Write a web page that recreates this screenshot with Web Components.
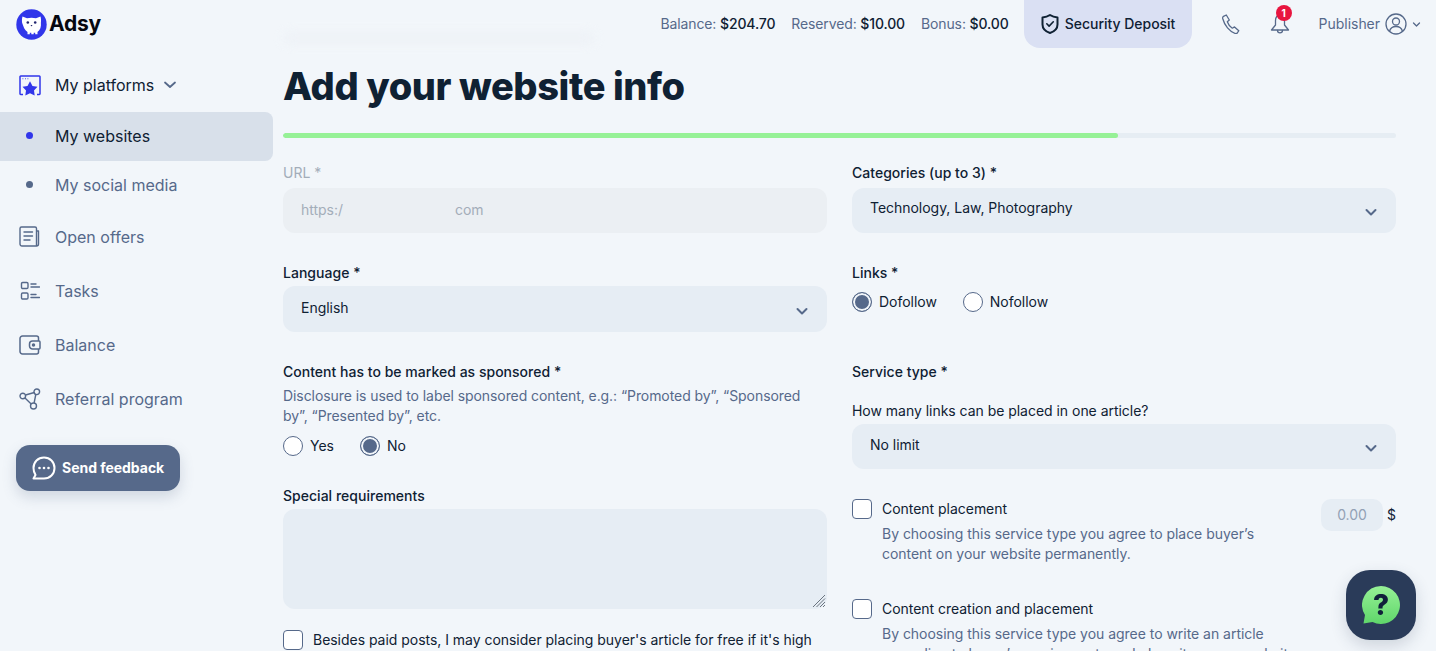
<!DOCTYPE html>
<html lang="en">
<head>
<meta charset="utf-8">
<title>Add your website info</title>
<style>
  html, body { margin: 0; height: 651px; overflow: hidden; }
  body { background: #f2f6fa; color: #0f2133; font: 14px/20px Inter, "Liberation Sans", sans-serif; letter-spacing: -.03px; }
</style>
</head>
<body>
<adsy-page>
  <app-header slot="top"></app-header>
  <side-nav slot="side"></side-nav>
  <website-form slot="main"></website-form>
</adsy-page>
<help-button></help-button>

<script>
const CHEVRON = `<svg width="14" height="14" viewBox="0 0 14 14" fill="none" stroke="#56698a" stroke-width="2" stroke-linecap="round" stroke-linejoin="round"><path d="M2.5 5l4.5 4.5L11.500 5"/></svg>`;

class AdsyPage extends HTMLElement {
  constructor() {
    super();
    this.attachShadow({ mode: 'open' });
    this.shadowRoot.innerHTML = `
      <style>
        :host { display: grid; grid-template-columns: 273px 1fr; grid-template-rows: 48px 1fr; height: 651px; overflow: hidden; }
        .top { grid-column: 1 / 3; }
      </style>
      <div class="top"><slot name="top"></slot></div>
      <div><slot name="side"></slot></div>
      <div><slot name="main"></slot></div>`;
  }
}

class AppHeader extends HTMLElement {
  constructor() {
    super();
    this.attachShadow({ mode: 'open' });
    this.shadowRoot.innerHTML = `
      <style>
        :host { display: flex; align-items: center; height: 48px; padding: 0 15px 0 16px; color: #0f2133; }
        .logo { display: flex; align-items: center; gap: 2px; font-size: 21px; font-weight: 700; color: #05070f; letter-spacing: -.2px; }
        .stats { margin-left: auto; display: flex; gap: 16px; color: #56698a; letter-spacing: -.13px; }
        .stats b { font-weight: 500; color: #0f2133; }
        .stats span { white-space: nowrap; }
        .deposit { margin-left: 15px; width: 168px; height: 48px; box-sizing: border-box; background: #dae0f3; border-radius: 0 0 16px 16px; display: flex; align-items: center; justify-content: center; gap: 5px; font-weight: 500; white-space: nowrap; }
        .phone { margin-left: 29px; display: flex; }
        .bell { margin-left: 29px; position: relative; display: flex; }
        .badge { position: absolute; top: -8px; left: 6px; width: 16px; height: 16px; border-radius: 50%; background: #e8153f; color: #fff; font-size: 10px; line-height: 16px; font-weight: 700; text-align: center; }
        .user { margin-left: 29px; display: flex; align-items: center; color: #56698a; gap: 5px; }
      </style>
      <div class="logo">
        <svg width="31" height="31" viewBox="0 0 31 31">
          <circle cx="15.500" cy="15.500" r="15.200" fill="#3136ea"/>
          <path d="M6.500 7.500l4.500 1.700c3-.7 6-.7 9 0l4.500-1.700c.6 2 .7 4.200.4 6.300.4 4-.6 7.400-3.400 9.200v2.200h-2.300v-1.400h-1.500v1.400h-2.400v-1.400h-1.500v1.400H11.500V23c-3-1.800-4-5.200-5.400-9.200-.3-2.100-.2-4.300.4-6.300z" fill="#fff"/>
          <circle cx="11.800" cy="13.500" r="1.300" fill="#20246e"/><circle cx="19.200" cy="13.500" r="1.300" fill="#20246e"/>
          <path d="M14.500 16h2l-1 1.500z" fill="#20246e"/>
        </svg>
        <span>Adsy</span>
      </div>
      <div class="stats">
        <span>Balance: <b>$204.70</b></span>
        <span>Reserved: <b>$10.00</b></span>
        <span>Bonus: <b>$0.00</b></span>
      </div>
      <div class="deposit">
        <svg width="20" height="22" viewBox="0 0 20 22" fill="none" stroke="#0f2133" stroke-width="2" stroke-linejoin="round" stroke-linecap="round"><path d="M10 2c2.300 1.600 4.800 2.300 7.500 2.500v7c0 4-3 7-7.500 8.500-4.500-1.500-7.500-4.500-7.500-8.500v-7C5.200 4.300 7.700 3.600 10 2z"/><path d="M6.800 10.800l2.300 2.300 4.200-4.300" stroke-width="1.600"/></svg>
        <span>Security Deposit</span>
      </div>
      <div class="phone">
        <svg width="20" height="20" viewBox="0 0 20 20" fill="none" stroke="#56698a" stroke-width="1.300" stroke-linejoin="round"><path d="M2.500 2.300L5.300 1l3 5-2 1.800c.8 2.300 2.600 5 5 6.400l2.200-1.300 4.300 3.800-1.500 2.300c-.5.600-1.200.7-2 .5C8.500 17.500 3.500 11.500 1.700 4.500c-.2-.9.200-1.700.8-2.200z"/></svg>
      </div>
      <div class="bell">
        <svg width="20" height="22" viewBox="0 0 20 22" fill="none" stroke="#56698a" stroke-width="1.300" stroke-linejoin="round" stroke-linecap="round"><path d="M10 2.500c-3 0-4.500 2.300-4.500 5v4.500L1.500 17h17l-4-5V7.500c0-2.700-1.500-5-4.500-5z"/><path d="M7.500 17.300c0 3.500 5 3.500 5 0"/></svg>
        <span class="badge">1</span>
      </div>
      <div class="user">
        <span>Publisher</span>
        <svg width="22" height="22" viewBox="0 0 22 22" fill="none" stroke="#56698a" stroke-width="1.300"><circle cx="11" cy="11" r="10"/><circle cx="11" cy="8.500" r="3.500"/><path d="M4.500 18.500c.8-3.500 3.500-5 6.500-5s5.700 1.500 6.500 5"/></svg>
        <svg width="9" height="9" viewBox="0 0 9 9" fill="none" stroke="#56698a" stroke-width="1.300" stroke-linecap="round" stroke-linejoin="round"><path d="M1.500 3l3 3 3-3"/></svg>
      </div>`;
  }
}

class NavItem extends HTMLElement {
  constructor() {
    super();
    this.attachShadow({ mode: 'open' });
    this.shadowRoot.innerHTML = `
      <style>
        :host { display: flex; align-items: center; height: 49px; box-sizing: border-box; padding-left: 19px; gap: 14px; font-size: 16px; line-height: 24px; color: #56698a; letter-spacing: 0; }
        :host([active]) { background: #d8e0ea; color: #0f2133; border-radius: 0 8px 8px 0; }
        :host([parent]) { color: #0f2133; }
        .icon { width: 22px; height: 24px; display: flex; align-items: center; justify-content: center; }
      </style>
      <span class="icon"><slot name="icon"></slot></span>
      <slot></slot>`;
  }
}

class SideNav extends HTMLElement {
  constructor() {
    super();
    this.attachShadow({ mode: 'open' });
    this.shadowRoot.innerHTML = `
      <style>
        :host { display: block; padding-top: 12px; }
        nav-item.tall { height: 54px; }
        nav-item.up { padding-bottom: 2px; }
        .dot { width: 7px; height: 7px; border-radius: 50%; background: #56698a; margin-left: -1px; }
        .dot.on { background: #3136ea; }
        .feedback { margin: 19px 0 0 16px; width: 164px; height: 46px; box-sizing: border-box; background: #56698a; border-radius: 14px; box-shadow: 0 6px 14px rgba(86,105,138,.22); color: #fff; font-weight: 700; display: flex; align-items: center; padding-left: 16px; gap: 6px; white-space: nowrap; }
      </style>
      <nav-item parent class="up" style="height:52px">
        <svg slot="icon" width="22" height="21" viewBox="0 0 22 21" fill="none"><path d="M4 19.500H1.700a.7.7 0 01-.7-.7V1.700A.7.7 0 011.700 1h18.600a.7.7 0 01.7.7v17.100a.7.7 0 01-.7.7H18" stroke="#3136ea" stroke-width="1.500"/><path d="M11 6.300l2.500 4.600 5 .9-3.500 3.700.7 5-4.700-2.200-4.700 2.200.7-5-3.500-3.700 5-.9z" fill="#3136ea"/><path d="M3.500 3.700h.8M6 3.700h.8M8.500 3.700h.8" stroke="#3136ea" stroke-width="1.100"/></svg>
        <span>My platforms</span>
        <svg style="margin-left:-5px" width="14" height="14" viewBox="0 0 14 14" fill="none" stroke="#56698a" stroke-width="1.800" stroke-linecap="round" stroke-linejoin="round"><path d="M2 4.500l5 4.500 5-4.500"/></svg>
      </nav-item>
      <nav-item active class="up"><span slot="icon" class="dot on"></span>My websites</nav-item>
      <nav-item class="up"><span slot="icon" class="dot"></span>My social media</nav-item>
      <nav-item class="tall">
        <svg slot="icon" width="22" height="22" viewBox="0 0 22 22" fill="none" stroke="#56698a" stroke-width="1.400" stroke-linecap="round" stroke-linejoin="round"><path d="M17.500 20H3a2 2 0 01-2-2V2.500A1.500 1.500 0 012.500 1h13.500a1.500 1.500 0 011.500 1.500V20a2 2 0 002-2V5h-2"/><path d="M5 6h8.500M5 10h8.500M5 14h6"/></svg>
        Open offers</nav-item>
      <nav-item class="tall">
        <svg slot="icon" width="20" height="20" viewBox="0 0 20 20" fill="none" stroke="#56698a" stroke-width="1.400" stroke-linecap="round"><rect x="1.500" y="1.500" width="6.500" height="6" rx="1.200"/><rect x="1.500" y="12" width="6.500" height="6" rx="1.200"/><path d="M11 3h5M11 6h8.500M11 13.500h5M11 16.500h8.500"/></svg>
        Tasks</nav-item>
      <nav-item class="tall">
        <svg slot="icon" width="22" height="20" viewBox="0 0 22 20" fill="none" stroke="#56698a" stroke-width="1.500" stroke-linejoin="round"><path d="M19.500 6V3a2 2 0 00-2-2H3.500A2.500 2.500 0 001 3.500v13A2.500 2.500 0 003.500 19h14a2 2 0 002-2v-3"/><path d="M13.500 6h6.500a1 1 0 011 1v6a1 1 0 01-1 1h-6.500a3 3 0 01-3-3V9a3 3 0 013-3z"/><circle cx="14.500" cy="10" r="1" fill="#56698a"/></svg>
        Balance</nav-item>
      <nav-item class="tall">
        <svg slot="icon" width="22" height="22" viewBox="0 0 22 22" fill="none" stroke="#56698a" stroke-width="1.400"><circle cx="3.800" cy="8" r="2.800"/><circle cx="17.800" cy="3.800" r="2.800"/><circle cx="14.500" cy="18" r="3"/><path d="M6.500 7l8.800-2.500M6 10l6.200 6M16.800 6.500l-1.700 8.500"/></svg>
        Referral program</nav-item>
      <div class="feedback">
        <svg width="24" height="24" viewBox="0 0 24 24" fill="none"><path d="M12 1.500c6 0 10.500 4.500 10.500 10.500S18 22.500 12 22.500H1.500l2-3.600C2.200 17 1.500 14.600 1.500 12 1.500 6 6 1.500 12 1.500z" stroke="#fff" stroke-width="2" stroke-linejoin="round"/><circle cx="7.500" cy="12" r="1.300" fill="#fff"/><circle cx="12" cy="12" r="1.300" fill="#fff"/><circle cx="16.500" cy="12" r="1.300" fill="#fff"/></svg>
        <span>Send feedback</span>
      </div>`;
  }
}

class FormField extends HTMLElement {
  constructor() {
    super();
    this.attachShadow({ mode: 'open' });
    this.shadowRoot.innerHTML = `
      <style>
        :host { display: block; }
        label { display: block; font-weight: 500; color: #0f2133; height: 20px; letter-spacing: .02px; }
        :host([disabled]) label { color: #a3adb9; font-weight: 400; }
        .body { margin-top: var(--gap, 5px); }
      </style>
      <label></label>
      <div class="body"><slot></slot></div>`;
    this.shadowRoot.querySelector('label').textContent = this.getAttribute('label') || '';
  }
}

class SelectBox extends HTMLElement {
  constructor() {
    super();
    this.attachShadow({ mode: 'open' });
    this.shadowRoot.innerHTML = `
      <style>
        :host { display: flex; align-items: center; justify-content: space-between; height: var(--h, 45px); padding: 0 18px; box-sizing: border-box; background: #e6edf4; border-radius: 12px; color: #0f2133; }
        span { margin-bottom: var(--lift, 3px); }
        svg { margin-top: 3px; flex: none; }
      </style>
      <span><slot></slot></span>${CHEVRON}`;
  }
}

class RadioOption extends HTMLElement {
  constructor() {
    super();
    this.attachShadow({ mode: 'open' });
    this.shadowRoot.innerHTML = `
      <style>
        :host { display: inline-flex; align-items: center; gap: 7px; color: #0f2133; }
        i { width: 20px; height: 20px; box-sizing: border-box; border-radius: 50%; border: 1px solid #56698a; background: #fff; display: block; }
        :host([checked]) i { background: #56698a; box-shadow: inset 0 0 0 2px #f2f6fa; }
      </style>
      <i></i><slot></slot>`;
  }
}

class CheckOption extends HTMLElement {
  constructor() {
    super();
    this.attachShadow({ mode: 'open' });
    this.shadowRoot.innerHTML = `
      <style>
        :host { display: flex; gap: 10px; color: #0f2133; align-items: flex-start; }
        i { flex: none; width: 20px; height: 20px; box-sizing: border-box; border-radius: 4px; border: 1px solid #56698a; background: #fff; display: block; }
      </style>
      <i></i><div><slot></slot></div>`;
  }
}

class WebsiteForm extends HTMLElement {
  constructor() {
    super();
    this.attachShadow({ mode: 'open' });
    this.shadowRoot.innerHTML = `
      <style>
        :host { display: block; padding: 0 40px 0 10px; }
        .crumbs { height: 14px; width: 312px; margin: -17px 0 3px; background: #edf1f6; border-radius: 7px; filter: blur(5px); opacity: .7; }
        h1 { margin: 0; padding-top: 14px; height: 48px; font-size: 38px; line-height: 48px; font-weight: 800; letter-spacing: -.4px; color: #0f2133; white-space: nowrap; }
        .bar { height: 5px; margin-top: 23px; background: #e6edf3; border-radius: 3px; overflow: hidden; }
        .bar div { height: 5px; width: 835px; background: #96f196; border-radius: 3px; }
        .cols { display: grid; grid-template-columns: 544px 544px; column-gap: 25px; margin-top: 25px; }
        .url { height: 45px; padding: 0 18px 2px; box-sizing: border-box; background: #ebeff3; border-radius: 12px; display: flex; align-items: center; color: #a3adb9; }
        .url .end { margin-left: 112px; }
        .hint { color: #56698a; letter-spacing: -.07px; }
        .radios { display: flex; gap: 26px; }
        .area { height: 100px; background: #e6edf4; border-radius: 12px; position: relative; }
        .area svg { position: absolute; right: 1px; bottom: 1px; }
        .mt30 { margin-top: 30px; }
        .row { display: flex; }
        .row check-option { flex: 1; }
        .price { width: 62px; height: 32px; border-radius: 10px; background: #e6edf4; color: #92a1b5; text-align: center; line-height: 32px; flex: none; }
        .cur { margin: 6px 0 0 4px; width: 9px; flex: none; }
        .desc { color: #56698a; margin-top: 5px; }
      </style>
      <div class="crumbs"></div>
      <h1>Add your website info</h1>
      <div class="bar"><div></div></div>
      <div class="cols">
        <div>
          <form-field label="URL *" disabled>
            <div class="url"><span>https:/</span><span class="end">com</span></div>
          </form-field>
          <form-field class="mt30" label="Language *" style="--gap:3px">
            <select-box style="--h:46px">English</select-box>
          </form-field>
          <form-field class="mt30" label="Content has to be marked as sponsored *" style="--gap:4px">
            <div class="hint">Disclosure is used to label sponsored content, e.g.: “Promoted by”, “Sponsored by”, “Presented by”, etc.</div>
            <div class="radios" style="margin-top:10px"><radio-option>Yes</radio-option><radio-option checked>No</radio-option></div>
          </form-field>
          <form-field label="Special requirements" style="--gap:3px;margin-top:30px">
            <div class="area">
              <svg width="14" height="14" viewBox="0 0 14 14" stroke="#5b6672" stroke-width=".9"><path d="M1 13L13 1M4.500 13L13 4.500M8 13l5-5M11 13l2-2"/></svg>
            </div>
          </form-field>
          <check-option style="margin-top:21px">Besides paid posts, I may consider placing buyer's article for free if it's high</check-option>
        </div>
        <div>
          <form-field label="Categories (up to 3) *">
            <select-box style="--lift:5px">Technology, Law, Photography</select-box>
          </form-field>
          <form-field class="mt30" label="Links *" style="--gap:9px">
            <div class="radios"><radio-option checked>Dofollow</radio-option><radio-option>Nofollow</radio-option></div>
          </form-field>
          <form-field label="Service type *" style="margin-top:50px;--gap:19px">
            <div style="margin-bottom:3px">How many links can be placed in one article?</div>
            <select-box>No limit</select-box>
          </form-field>
          <div class="row" style="margin-top:30px">
            <check-option>
              Content placement
              <div class="desc">By choosing this service type you agree to place buyer’s<br>content on your website permanently.</div>
            </check-option>
            <div class="price">0.00</div><div class="cur">$</div>
          </div>
          <check-option style="margin-top:35px">
            <div>Content creation and placement
            <div class="desc">By choosing this service type you agree to write an article<br>according to buyer’s requirements and place it on your website</div></div>
          </check-option>
        </div>
      </div>`;
  }
}

class HelpButton extends HTMLElement {
  constructor() {
    super();
    this.attachShadow({ mode: 'open' });
    this.shadowRoot.innerHTML = `
      <style>
        :host { position: fixed; left: 1346px; top: 570px; width: 70px; height: 70px; border-radius: 24px; background: #2a3b59; box-shadow: 0 6px 16px rgba(42,59,89,.18); display: flex; align-items: center; justify-content: center; }
        .wrap { position: relative; width: 38px; height: 38px; }
        span { position: absolute; inset: 0; text-align: center; font: 800 28px/38px Inter, "Liberation Sans", sans-serif; color: #10203a; }
      </style>
      <div class="wrap">
        <svg width="38" height="38" viewBox="0 0 38 38" style="display:block">
          <defs><linearGradient id="g" x1="0.500" y1="0" x2="0.500" y2="1"><stop offset="0" stop-color="#96f196"/><stop offset="1" stop-color="#5fd66a"/></linearGradient></defs>
          <path d="M19 0a19 19 0 11-8.500 36L1.500 37.500 3 29A19 19 0 0119 0z" fill="url(#g)"/>
        </svg>
        <span>?</span>
      </div>`;
  }
}

customElements.define('adsy-page', AdsyPage);
customElements.define('app-header', AppHeader);
customElements.define('nav-item', NavItem);
customElements.define('side-nav', SideNav);
customElements.define('form-field', FormField);
customElements.define('select-box', SelectBox);
customElements.define('radio-option', RadioOption);
customElements.define('check-option', CheckOption);
customElements.define('website-form', WebsiteForm);
customElements.define('help-button', HelpButton);
</script>
</body>
</html>
